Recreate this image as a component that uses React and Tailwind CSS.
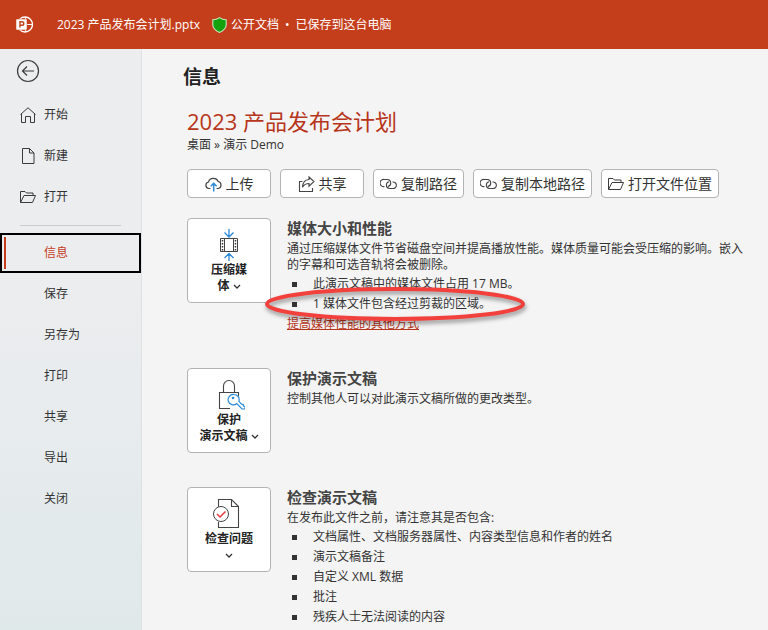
import React, { useState } from 'react';

const mainItems = [
  { label: '开始', Icon: HomeIcon },
  { label: '新建', Icon: FileIcon },
  { label: '打开', Icon: FolderIcon },
];

const fileItems = ['信息', '保存', '另存为', '打印', '共享', '导出', '关闭'];

function HomeIcon() {
  return (
    <svg className="w-4 h-4" viewBox="0 0 16 16" fill="none" stroke="#3b3b3b" aria-hidden="true">
      <path d="M.5 7.5L8 .8l7.500 6.700M1.500 6.700v8.800h4V9.500h5v6h4V6.700" />
    </svg>
  );
}

function FileIcon() {
  return (
    <svg className="w-4 h-4" viewBox="0 0 16 16" fill="none" stroke="#3b3b3b" aria-hidden="true">
      <path d="M2.500.5h7l4.500 4.500v10.500H2.500zM9.500.5V5H14" />
    </svg>
  );
}

function FolderIcon() {
  return (
    <svg className="w-4 h-4" viewBox="0 0 16 16" fill="none" stroke="#3b3b3b" aria-hidden="true">
      <path d="M.5 13.500v-11h4.500l1.500 1.500h6.500v2.500M.5 13.500l3.500-7h11.500l-3 7z" />
    </svg>
  );
}

function CloudIcon() {
  return (
    <svg className="w-[17px] h-4" viewBox="0 0 17 16" fill="none" aria-hidden="true">
      <path d="M5.500 12.500H3.800A3.300 3.300 0 0 1 3.500 6 5.200 5.200 0 0 1 13.200 5.500 3.600 3.600 0 0 1 13.300 12.500H11.500" stroke="#444" strokeWidth="1.200" />
      <path d="M8.700 15.500V7.500M5.800 10.200l2.900-2.900 2.900 2.900" stroke="#2b88d8" strokeWidth="1.500" />
    </svg>
  );
}

function ShareIcon() {
  return (
    <svg className="w-[17px] h-4" viewBox="0 0 17 16" fill="none" stroke="#444" strokeWidth="1.100" aria-hidden="true">
      <path d="M4.500 5.500H1.500v10h13v-3.500" />
      <path d="M11 1l5 4.500-5 4.700V7.500C8 7.500 6 8.700 4.500 11.200 4.700 7 7 3.700 11 3.500z" />
    </svg>
  );
}

function LinkIcon() {
  return (
    <svg className="w-[17px] h-4" viewBox="0 0 17 16" fill="none" stroke="#444" strokeWidth="1.100" aria-hidden="true">
      <path d="M4.500 10.500A3.600 3.600 0 1 1 4.500 3.500H7.500A3.500 3.500 0 0 1 8 10.400" />
      <path d="M12.500 6A3.300 3.300 0 1 1 12.500 12.500H9.500A3.400 3.400 0 0 1 9 5.800" />
    </svg>
  );
}

function CompressIcon() {
  return (
    <svg className="w-8 h-8" viewBox="0 0 32 32" fill="none" aria-hidden="true">
      <path d="M16 0v7.500M11.500 3.500l4.500 4.500 4.500-4.500M16 32v-7M11.500 29l4.500-4.500 4.500 4.500" stroke="#2b88d8" strokeWidth="1.300" />
      <path d="M7.500 9.500h17v13h-17zM11.500 9.500v13M20.500 9.500v13" stroke="#444" />
      <path d="M9.500 11v11M22.500 11v11" stroke="#333" strokeWidth="1.500" strokeDasharray="1.500 1.500" />
    </svg>
  );
}

function LockIcon() {
  return (
    <svg className="w-8 h-8" viewBox="0 0 32 32" fill="none" aria-hidden="true">
      <path d="M10.500 13.500V7a5.500 5.500 0 0 1 11 0v6.500M17 29.500H6.500v-16h19v4" stroke="#444" strokeWidth="1.100" />
      <path d="M21 15.500a5.200 5.200 0 1 0 2.800 9L29 30l3-.2v-2.500l-1.500-.3-.3-1.700-1.700-.2-2.600-2.800a5.200 5.200 0 0 0-4.900-6.800z" fill="#fff" stroke="#2b88d8" strokeWidth="1.200" />
      <circle cx="20" cy="19" r="1.300" fill="#2b88d8" />
    </svg>
  );
}

function InspectIcon() {
  return (
    <svg className="w-8 h-8" viewBox="0 0 32 32" fill="none" aria-hidden="true">
      <path d="M5.500 9V1.500h13l7 7v21h-20V24M18.500 1.500v7h7" stroke="#444" strokeWidth="1.100" />
      <circle cx="8" cy="16" r="7.500" fill="#fff" stroke="#444" />
      <path d="M4 16l3 3 5.500-5.500" stroke="#e8383d" strokeWidth="1.500" />
    </svg>
  );
}

function Chevron() {
  return (
    <svg className="inline w-2 h-2" viewBox="0 0 8 8" fill="none" stroke="#333" strokeWidth="1.300" aria-hidden="true">
      <path d="M1 2l3 3 3-3" />
    </svg>
  );
}

function ActionButton({ icon, children, className = '' }) {
  return (
    <button className={`flex items-center justify-center gap-1 h-[29px] px-1.5 bg-white border border-[#b3b3b3] rounded text-[14px] leading-5 whitespace-nowrap hover:bg-gray-50 ${className}`}>
      {icon}
      {children}
    </button>
  );
}

function Section({ icon, label, title, children }) {
  return (
    <section className="flex items-start gap-4">
      <button className="flex flex-col items-center shrink-0 w-[84px] h-[85px] pt-2.5 bg-white border border-[#b3b3b3] rounded text-[12px] leading-4 font-bold text-[#222] hover:bg-gray-50">
        {icon}
        <span className="mt-px">{label}</span>
      </button>
      <div className="flex-1 min-w-0">
        <h3 className="mb-[3px] text-[15px] leading-5 font-bold text-[#444]">{title}</h3>
        {children}
      </div>
    </section>
  );
}

function Bullet({ children }) {
  return (
    <li className="relative flex items-center gap-4 pl-[5px] leading-5">
      <span className="w-[5px] h-[5px] bg-[#333]" />
      <span>{children}</span>
    </li>
  );
}

// Red ring around a bullet row
function Highlight() {
  return (
    <svg className="absolute -left-6 -top-2 w-[264px] h-10 pointer-events-none drop-shadow-[1px_3px_2px_rgba(0,0,0,0.4)]" viewBox="0 0 264 40" fill="none" aria-hidden="true">
      <ellipse cx="132" cy="18" rx="128" ry="15" stroke="#f2403c" strokeWidth="4" />
    </svg>
  );
}

export default function App() {
  const [active, setActive] = useState('信息');

  return (
    <div className="flex flex-col min-h-screen bg-[#f4f4f4] text-[12px] text-[#333] font-['Open_Sans','Noto_Sans_CJK_SC',sans-serif]">
      <header className="flex items-center h-[49px] pl-4 bg-[#c43e1c] text-white leading-5 whitespace-nowrap">
        <svg className="w-[17px] h-[17px] mr-6" viewBox="0 0 17 17" fill="none" aria-hidden="true">
          <circle cx="9" cy="8.500" r="7.500" stroke="#fff" strokeWidth="1.300" />
          <path d="M9.500 1v15M9.500 8.500h7" stroke="#fff" strokeWidth="1.200" />
          <rect y="3" width="11" height="11" rx="1" fill="#fff" stroke="#c43e1c" strokeWidth=".5" />
          <path d="M4 11.500V5.700h2a1.700 1.700 0 0 1 0 3.600H4" stroke="#c43e1c" strokeWidth="1.400" />
        </svg>
        <span>2023 产品发布会计划.pptx</span>
        <svg className="w-[15px] h-4 ml-3 mr-1" viewBox="0 0 15 16" aria-hidden="true">
          <path d="M7.500.6C9.500 2 11.700 2.700 14.200 2.800v5c0 3.600-2.900 6-6.700 7.600C3.700 13.800.8 11.400.8 7.800v-5C3.300 2.700 5.500 2 7.500.6z" fill="#13a10e" stroke="#c8e6c0" strokeWidth="1.100" />
        </svg>
        <span className="flex gap-1.5">
          <span>公开文档</span>
          <span>•</span>
          <span>已保存到这台电脑</span>
        </span>
      </header>

      <div className="flex flex-1">
        <nav className="shrink-0 w-[142px] pt-2.5 border-r border-[#dfe2e4] bg-linear-to-b from-[#ecedef] from-40% to-[#e0e9ea]">
          <button className="block ml-4" aria-label="返回">
            <svg className="w-6 h-6" viewBox="0 0 24 24" fill="none" stroke="#3b3b3b" strokeWidth="1.200" aria-hidden="true">
              <circle cx="12" cy="12" r="10.500" />
              <path d="M18 12H6.500M11 7.500L6.500 12l4.500 4.500" />
            </svg>
          </button>

          <div className="flex flex-col gap-px mt-3">
            {mainItems.map(({ label, Icon }) => (
              <button key={label} className="flex items-center gap-2 h-10 pl-5 text-left hover:bg-black/5">
                <Icon />
                {label}
              </button>
            ))}
          </div>

          <hr className="mt-2 mb-[7px] ml-5 mr-5 border-[#c9cbcd]" />

          <div className="flex flex-col gap-px">
            {fileItems.map((label) => (
              <button
                key={label}
                onClick={() => setActive(label)}
                className={
                  active === label
                    ? 'flex items-stretch h-10 p-0.5 border-2 border-black text-left text-[#c43e1c]'
                    : 'flex items-center h-10 pl-11 text-left hover:bg-black/5'
                }
              >
                {active === label && <span className="w-0.5 mr-[38px] bg-[#c43e1c]" />}
                <span className="self-center">{label}</span>
              </button>
            ))}
          </div>
        </nav>

        <main className="flex-1 min-w-0 pt-4 pl-[45px] pr-4">
          <h1 className="-ml-1 text-[19px] leading-6 font-bold text-[#222]">信息</h1>
          <h2 className="mt-4 text-[22px] leading-8 text-[#b7351a]">2023 产品发布会计划</h2>
          <p className="leading-4">桌面 » 演示 Demo</p>

          <div className="flex flex-wrap gap-[9px] mt-4">
            <ActionButton icon={<CloudIcon />} className="w-[84px]">上传</ActionButton>
            <ActionButton icon={<ShareIcon />} className="w-[84px]">共享</ActionButton>
            <ActionButton icon={<LinkIcon />}>复制路径</ActionButton>
            <ActionButton icon={<LinkIcon />}>复制本地路径</ActionButton>
            <ActionButton icon={<FolderIcon />}>打开文件位置</ActionButton>
          </div>

          <div className="flex flex-col gap-[34px] mt-5">
            <Section icon={<CompressIcon />} label={<>压缩媒<br />体 <Chevron /></>} title="媒体大小和性能">
              <p className="leading-4">
                通过压缩媒体文件节省磁盘空间并提高播放性能。媒体质量可能会受压缩的影响。嵌入的字幕和可选音轨将会被删除。
              </p>
              <ul className="mt-px">
                <Bullet>此演示文稿中的媒体文件占用 17 MB。</Bullet>
                <Bullet>
                  1 媒体文件包含经过剪裁的区域。
                  <Highlight />
                </Bullet>
              </ul>
              <a href="#" className="block w-fit leading-5 text-[#b7351a] underline">提高媒体性能的其他方式</a>
            </Section>

            <Section icon={<LockIcon />} label={<>保护<br />演示文稿 <Chevron /></>} title="保护演示文稿">
              <p className="leading-4">控制其他人可以对此演示文稿所做的更改类型。</p>
            </Section>

            <Section icon={<InspectIcon />} label={<>检查问题<br /><Chevron /></>} title="检查演示文稿">
              <p className="leading-4">在发布此文件之前，请注意其是否包含:</p>
              <ul className="mt-px">
                <Bullet>文档属性、文档服务器属性、内容类型信息和作者的姓名</Bullet>
                <Bullet>演示文稿备注</Bullet>
                <Bullet>自定义 XML 数据</Bullet>
                <Bullet>批注</Bullet>
                <Bullet>残疾人士无法阅读的内容</Bullet>
              </ul>
            </Section>
          </div>
        </main>
      </div>
    </div>
  );
}
